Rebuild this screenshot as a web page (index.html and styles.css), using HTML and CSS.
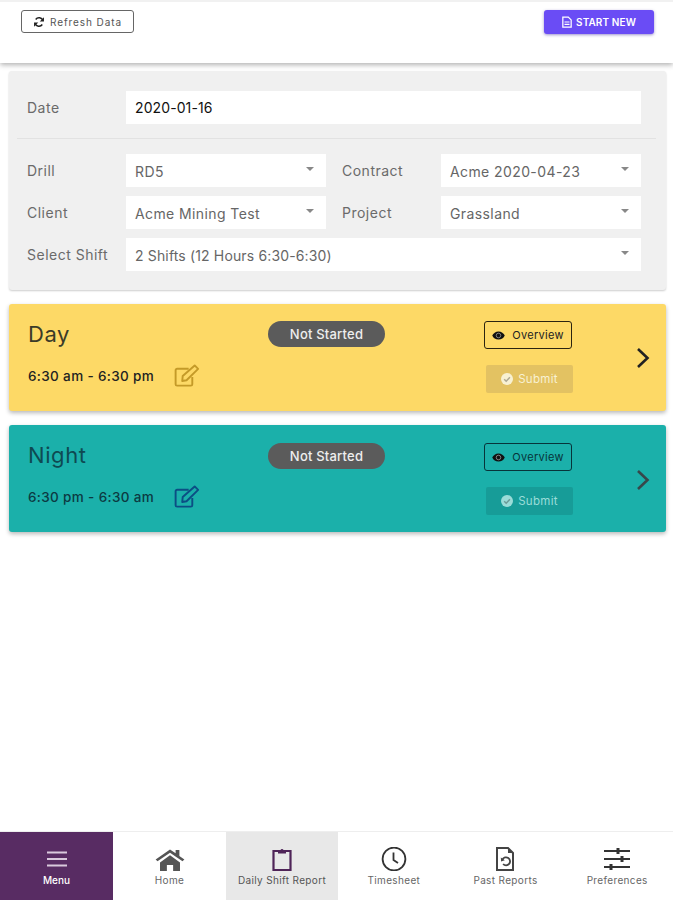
FILE: index.html
```html
<!DOCTYPE html>
<html lang="en">
<head>
  <meta charset="UTF-8">
  <meta name="viewport" content="width=device-width, initial-scale=1.0">
  <title>Daily Shift Report</title>
  <link rel="stylesheet" href="styles.css">
</head>
<body>
  <div class="page">
    <header class="topbar">
      <button class="btn-refresh">
        <svg class="ico-refresh" viewBox="0 0 16 16"><path d="M13.2 6.2A5.4 5.4 0 0 0 3.6 4.6M2.8 9.8a5.4 5.4 0 0 0 9.6 1.6" fill="none" stroke="#222" stroke-width="2"/><path d="M14.6 1.6v5.6H9zM1.4 14.4V8.8H7z" fill="#222"/></svg>
        Refresh Data
      </button>
      <button class="btn-start">
        <svg class="ico-file" viewBox="0 0 12 14"><path d="M1 1h6.5L11 4.5V13H1z" fill="none" stroke="#fff" stroke-width="1.5"/><path d="M3 7h6M3 9.8h6" stroke="#fff" stroke-width="1.3"/></svg>
        START NEW
      </button>
    </header>

    <section class="panel">
      <div class="date-row">
        <span class="field-label">Date</span>
        <div class="field field-date">2020-01-16</div>
      </div>
      <hr class="divider">
      <div class="select-grid">
        <span class="field-label">Drill</span>
        <div class="field">RD5<i class="caret"></i></div>
        <span class="field-label">Contract</span>
        <div class="field">Acme 2020-04-23<i class="caret"></i></div>

        <span class="field-label">Client</span>
        <div class="field">Acme Mining Test<i class="caret"></i></div>
        <span class="field-label">Project</span>
        <div class="field">Grassland<i class="caret"></i></div>

        <span class="field-label">Select Shift</span>
        <div class="field field-wide">2 Shifts (12 Hours 6:30-6:30)<i class="caret"></i></div>
      </div>
    </section>

    <section class="shift shift-day">
      <div class="shift-info">
        <h2>Day</h2>
        <div class="shift-time">
          6:30 am - 6:30 pm
          <svg class="ico-edit" viewBox="0 0 28 24"><path d="M19 13.5V21a1.6 1.6 0 0 1-1.6 1.6H3.2A1.6 1.6 0 0 1 1.6 21V6.5a1.6 1.6 0 0 1 1.6-1.6h12" fill="none" stroke="currentColor" stroke-width="2"/><path d="M9 12.5 21.5 1.5l3.6 3.6L13 17l-4.5.8z" fill="none" stroke="currentColor" stroke-width="2" stroke-linejoin="round"/></svg>
        </div>
      </div>
      <div class="status">Not Started</div>
      <div class="shift-actions">
        <button class="btn-overview">
          <svg class="ico-eye" viewBox="0 0 16 11"><path d="M8 .5C4.500.5 1.600 2.600.3 5.500 1.600 8.400 4.500 10.500 8 10.500s6.400-2.100 7.700-5C14.400 2.600 11.500.5 8 .5z" fill="#111"/><circle cx="8" cy="5.500" r="2.800" fill="none" stroke="#fff" stroke-opacity=".55" stroke-width="1"/></svg>
          Overview
        </button>
        <button class="btn-submit">
          <svg class="ico-check" viewBox="0 0 12 12"><circle cx="6" cy="6" r="6" fill="currentColor"/><path d="M3.200 6.200 5.200 8.200 8.900 4.300" fill="none" stroke="#000" stroke-opacity=".3" stroke-width="1.500"/></svg>
          Submit
        </button>
      </div>
      <svg class="chevron" viewBox="0 0 14 22"><path d="M2 2l9.500 9L2 20" fill="none" stroke="currentColor" stroke-width="2.600"/></svg>
    </section>

    <section class="shift shift-night">
      <div class="shift-info">
        <h2>Night</h2>
        <div class="shift-time">
          6:30 pm - 6:30 am
          <svg class="ico-edit" viewBox="0 0 28 24"><path d="M19 13.5V21a1.6 1.6 0 0 1-1.6 1.6H3.2A1.6 1.6 0 0 1 1.6 21V6.5a1.6 1.6 0 0 1 1.6-1.6h12" fill="none" stroke="currentColor" stroke-width="2"/><path d="M9 12.5 21.5 1.500l3.600 3.600L13 17l-4.500.8z" fill="none" stroke="currentColor" stroke-width="2" stroke-linejoin="round"/></svg>
        </div>
      </div>
      <div class="status">Not Started</div>
      <div class="shift-actions">
        <button class="btn-overview">
          <svg class="ico-eye" viewBox="0 0 16 11"><path d="M8 .5C4.500.5 1.600 2.600.3 5.500 1.600 8.400 4.500 10.500 8 10.500s6.400-2.100 7.700-5C14.400 2.600 11.500.5 8 .5z" fill="#111"/><circle cx="8" cy="5.500" r="2.800" fill="none" stroke="#fff" stroke-opacity=".55" stroke-width="1"/></svg>
          Overview
        </button>
        <button class="btn-submit">
          <svg class="ico-check" viewBox="0 0 12 12"><circle cx="6" cy="6" r="6" fill="currentColor"/><path d="M3.200 6.200 5.200 8.200 8.900 4.300" fill="none" stroke="#000" stroke-opacity=".3" stroke-width="1.500"/></svg>
          Submit
        </button>
      </div>
      <svg class="chevron" viewBox="0 0 14 22"><path d="M2 2l9.500 9L2 20" fill="none" stroke="currentColor" stroke-width="2.600"/></svg>
    </section>

    <nav class="tabs">
      <a class="tab tab-menu">
        <svg viewBox="0 0 24 24"><path d="M2 5.500h20M2 12h20M2 18.500h20" stroke="#d9c9dd" stroke-width="2.200"/></svg>
        Menu
      </a>
      <a class="tab tab-home">
        <svg viewBox="0 0 24 24" preserveAspectRatio="none"><path d="M12 2.500 .5 12.500l1.500 1.800L12 5.800l10 8.500 1.500-1.800-4-3.500V3h-3v3.200z" fill="#555"/><path d="M4 15.500 12 8.300l8 7.200V24h-5.500v-6h-5v6H4z" fill="#555"/></svg>
        Home
      </a>
      <a class="tab tab-active">
        <svg viewBox="0 0 24 24"><path d="M8 4H3.500v19h17V4H16" fill="none" stroke="#4f2458" stroke-width="2.200"/><path d="M8 6.500V3h2.500a1.600 1.600 0 0 1 3 0H16v3.500z" fill="#4f2458"/></svg>
        Daily Shift Report
      </a>
      <a class="tab">
        <svg viewBox="0 0 24 24"><circle cx="12" cy="12" r="11.400" fill="none" stroke="#333" stroke-width="1.800"/><path d="M11.500 5.500V13l4.500 3" fill="none" stroke="#333" stroke-width="1.800"/></svg>
        Timesheet
      </a>
      <a class="tab">
        <svg viewBox="0 0 24 24"><path d="M4 1h11l5 5v17H4z" fill="none" stroke="#444" stroke-width="2"/><path d="M15 1v5h5z" fill="#444"/><path d="M9.500 12.500a4 4 0 1 1 .6 4.500" fill="none" stroke="#444" stroke-width="1.800"/><path d="M7.800 10.500l.3 4 3.700-1.300z" fill="#444"/></svg>
        Past Reports
      </a>
      <a class="tab">
        <svg viewBox="0 0 28 24"><path d="M1 4h26M1 12h26M1 20h26" stroke="#333" stroke-width="2"/><path d="M15 1v6M19 9v6M8 17v6" stroke="#333" stroke-width="3"/></svg>
        Preferences
      </a>
    </nav>
  </div>
</body>
</html>
```

FILE: styles.css
```css
* {
  box-sizing: border-box;
}
html, body {
  margin: 0;
  height: 100%;
}
body {
  font-family: "Inter", "Noto Sans", sans-serif;
  background-color: #fff;
  color: #555;
}
.page {
  height: 900px;
  display: flex;
  flex-direction: column;
  overflow: hidden;
}

/* top bar */
.topbar {
  height: 63px;
  flex: none;
  padding: 8px 19px 0 21px;
  display: flex;
  justify-content: space-between;
  align-items: flex-start;
  border-top: 2px solid #f1f1f1;
  margin-bottom: 8px;
  box-shadow: 0 2px 5px rgba(0, 0, 0, 0.3);
}
.topbar button {
  font-family: inherit;
  display: flex;
  align-items: center;
  justify-content: center;
  cursor: pointer;
}
.btn-refresh {
  width: 113px;
  height: 23px;
  gap: 5px;
  padding: 0;
  font-size: 10px;
  letter-spacing: 0.9px;
  color: #555;
  background-color: #fff;
  border: 1.500px solid #666;
  border-radius: 3px;
}
.ico-refresh {
  width: 12px;
  height: 12px;
}
.btn-start {
  width: 110px;
  height: 24px;
  gap: 4px;
  padding: 0;
  font-size: 10px;
  font-weight: 600;
  letter-spacing: 0.1px;
  color: #fff;
  background-color: #6a4cf5;
  border: none;
  border-radius: 3px;
  box-shadow: 0 1px 3px rgba(60, 40, 160, 0.5);
}
.ico-file {
  width: 10px;
  height: 12px;
}

/* form panel */
.panel {
  flex: none;
  margin: 0 7px 0 9px;
  height: 219px;
  padding: 20px 25px 0 18px;
  background-color: #f0f0f0;
  border-radius: 3px;
  box-shadow: 0 1px 2px rgba(0, 0, 0, 0.2);
}
.date-row {
  display: grid;
  grid-template-columns: 99px 1fr;
  align-items: center;
}
.field-label {
  font-size: 14px;
  letter-spacing: 0.5px;
  color: #6a6a6a;
}
.field {
  height: 33px;
  padding: 2px 9px 0;
  display: flex;
  align-items: center;
  justify-content: space-between;
  background-color: #fff;
  font-size: 14px;
  letter-spacing: 0.4px;
  color: #666;
}
.field-date {
  padding-top: 0;
  color: #111;
  letter-spacing: 0.1px;
}
.field-wide {
  grid-column: 2 / 5;
  letter-spacing: 0.15px;
}
.divider {
  margin: 14px -15px 15px -10px;
  border: none;
  border-top: 1.500px solid #e2e2e2;
}
.select-grid {
  display: grid;
  grid-template-columns: 99px 200px 115px 200px;
  row-gap: 9px;
  align-items: center;
}
.select-grid .field-label:nth-of-type(even) {
  padding-left: 16px;
}
.caret {
  margin: -6px 3px 0 0;
  border-left: 4px solid transparent;
  border-right: 4px solid transparent;
  border-top: 4px solid #888;
}

/* shift cards */
.shift {
  flex: none;
  margin: 14px 7px 0 9px;
  height: 107px;
  padding: 17px 16px 0 19px;
  display: grid;
  grid-template-columns: 240px 216px 102px 1fr;
  align-items: start;
  border-radius: 3px;
  box-shadow: 0 2px 4px rgba(0, 0, 0, 0.28);
}
.shift-day {
  background-color: #fdd966;
  --edit: #c49a28;
  --chev: #222;
  --submit-bg: #e3c262;
  --submit-text: #f8f1d2;
  --overview-border: #2b2410;
}
.shift-night {
  background-color: #1bb0aa;
  --edit: #0c4e84;
  --chev: #37474a;
  --submit-bg: #179c98;
  --submit-text: #9adcd8;
  --overview-border: #07343a;
}
.shift-night .status,
.shift-night .shift-actions {
  margin-top: 1px;
}
.shift-info h2 {
  margin: 0;
  font-size: 22px;
  line-height: 26px;
  font-weight: 400;
  letter-spacing: 0.6px;
  color: #3b3b28;
}
.shift-night h2 {
  color: #0e4a52;
}
.shift-time {
  margin-top: 17px;
  display: flex;
  align-items: center;
  gap: 20px;
  font-size: 13.500px;
  font-weight: 450;
  letter-spacing: 0.35px;
  color: #222;
}
.shift-night .shift-time {
  color: #0c3a42;
}
.ico-edit {
  width: 27px;
  height: 23px;
  color: var(--edit);
}
.status {
  width: 117px;
  height: 26px;
  display: flex;
  align-items: center;
  justify-content: center;
  background-color: #5b5b5b;
  color: #eee;
  font-size: 13px;
  font-weight: 500;
  letter-spacing: 0.2px;
  border-radius: 13px;
}
.shift-actions {
  display: flex;
  flex-direction: column;
  gap: 16px;
  align-items: flex-start;
}
.shift-actions button {
  font-family: inherit;
  display: flex;
  align-items: center;
  justify-content: center;
  cursor: pointer;
  padding: 0;
}
.btn-overview {
  width: 88px;
  height: 28px;
  gap: 7px;
  font-size: 11px;
  letter-spacing: 0.3px;
  color: #222;
  background: transparent;
  border: 1.500px solid var(--overview-border);
  border-radius: 3px;
}
.shift-night .btn-overview {
  color: #07343a;
}
.ico-eye {
  width: 13px;
  height: 9px;
}
.btn-submit {
  margin-left: 2px;
  width: 87px;
  height: 28px;
  gap: 5px;
  font-size: 11.500px;
  letter-spacing: 0.3px;
  color: var(--submit-text);
  background-color: var(--submit-bg);
  border: none;
  border-radius: 2px;
}
.ico-check {
  width: 12px;
  height: 12px;
}
.chevron {
  margin-top: 26px;
  justify-self: end;
  width: 14px;
  height: 22px;
  color: var(--chev);
}
.shift-night .chevron {
  margin-top: 27px;
}

/* bottom tabs */
.tabs {
  margin-top: auto;
  height: 69px;
  flex: none;
  display: grid;
  grid-template-columns: 113px 113px 112px 1fr 1fr 1fr;
  border-top: 1px solid #eee;
}
.tab {
  padding-top: 15px;
  display: flex;
  flex-direction: column;
  align-items: center;
  gap: 3px;
  font-size: 10px;
  letter-spacing: 0.35px;
  color: #666;
  text-decoration: none;
}
.tab svg {
  height: 24px;
  width: 28px;
}
.tab-home svg {
  width: 30px;
}
.tab-menu {
  background-color: #582c63;
  color: #fff;
  font-weight: 500;
  letter-spacing: 0;
}
.tab-active {
  background-color: #e8e8e8;
  color: #555;
}
```
